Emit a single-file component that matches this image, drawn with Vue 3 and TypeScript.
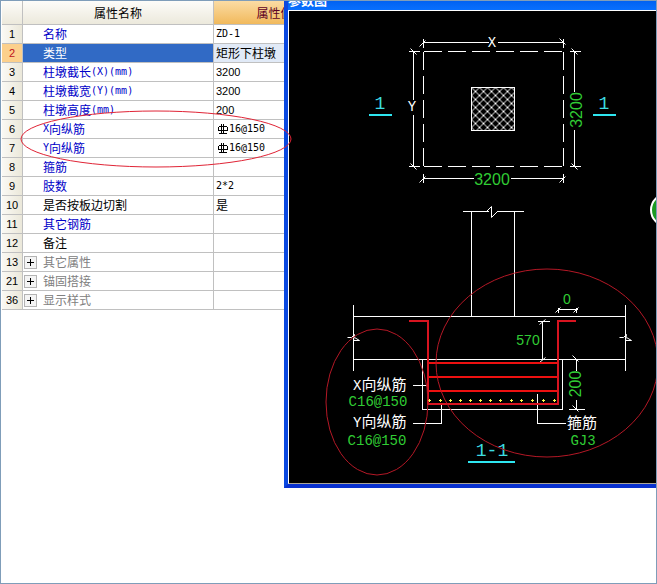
<script setup lang="ts">
import { h, ref, type FunctionalComponent } from 'vue'

type Tone = 'blue' | 'black' | 'gray'
interface Row {
  no: number
  name: string
  value?: string
  tone: Tone
  rebar?: boolean
  group?: boolean
}

const rows: Row[] = [
  { no: 1, name: '名称', value: 'ZD-1', tone: 'blue' },
  { no: 2, name: '类型', value: '矩形下柱墩', tone: 'blue' },
  { no: 3, name: '柱墩截长(X)(mm)', value: '3200', tone: 'blue' },
  { no: 4, name: '柱墩截宽(Y)(mm)', value: '3200', tone: 'blue' },
  { no: 5, name: '柱墩高度(mm)', value: '200', tone: 'blue' },
  { no: 6, name: 'X向纵筋', value: '16@150', tone: 'blue', rebar: true },
  { no: 7, name: 'Y向纵筋', value: '16@150', tone: 'blue', rebar: true },
  { no: 8, name: '箍筋', tone: 'blue' },
  { no: 9, name: '肢数', value: '2*2', tone: 'blue' },
  { no: 10, name: '是否按板边切割', value: '是', tone: 'black' },
  { no: 11, name: '其它钢筋', tone: 'blue' },
  { no: 12, name: '备注', tone: 'black' },
  { no: 13, name: '其它属性', tone: 'gray', group: true },
  { no: 21, name: '锚固搭接', tone: 'gray', group: true },
  { no: 36, name: '显示样式', tone: 'gray', group: true },
]

const selected = ref(2)
const dots: number[] = [429, 440, 450, 460, 470, 480, 490, 500, 511, 521, 532, 543, 554]

function runClass(run: string): string {
  if (/^\d+$/.test(run)) return 'digits'
  return /^[\x20-\x7e]/.test(run) ? 'latin' : 'han'
}

// Latin runs use narrow faces, Chinese runs keep the row's font.
const MixedText: FunctionalComponent<{ text: string }> = (props) =>
  (props.text.match(/[\x20-\x7e]+|[^\x20-\x7e]+/g) ?? []).map((run) =>
    h('span', { class: runClass(run) }, run),
  )
MixedText.props = ['text']
</script>

<template>
  <main class="panel">
    <table class="props">
      <colgroup>
        <col class="col-no" />
        <col class="col-name" />
        <col class="col-value" />
        <col />
      </colgroup>
      <thead>
        <tr>
          <th></th>
          <th>属性名称</th>
          <th class="active">属性值</th>
          <th></th>
        </tr>
      </thead>
      <tbody>
        <tr
          v-for="row in rows"
          :key="row.no"
          :class="{ selected: row.no === selected }"
          @click="selected = row.no"
        >
          <th scope="row">
            <div class="line number-line"><MixedText :text="String(row.no)" /></div>
          </th>
          <td class="name" :class="row.tone">
            <div class="line">
              <span class="toggle-slot">
                <button v-if="row.group" type="button" class="toggle" :aria-label="row.name">
                  <svg width="11" height="11" viewBox="0 0 11 11" aria-hidden="true">
                    <path d="M2 5h7v1h-7zM5 2h1v7h-1z" fill="#000" />
                  </svg>
                </button>
              </span>
              <MixedText :text="row.name" />
            </div>
          </td>
          <td class="value">
            <div class="line value-line">
              <svg v-if="row.rebar" width="13" height="11" viewBox="0 0 13 11" aria-hidden="true">
                <path
                  d="M3 2.500h8M2.500 3v4M3 6.500h8M11.500 3v4M5.500 0v9M7.500 0v9M3 9.500h8"
                  fill="none"
                  stroke="#000"
                />
              </svg>
              <MixedText v-if="row.value" :text="row.value" />
            </div>
          </td>
          <td></td>
        </tr>
      </tbody>
    </table>

    <section class="window">
      <header class="titlebar">参数图</header>
      <div class="canvas">
        <svg width="368" height="472" viewBox="289 11 368 472" role="img" aria-label="参数图">
          <defs>
            <pattern id="hatch" x="471" y="87" width="8" height="8" patternUnits="userSpaceOnUse">
              <path
                d="M-1-1l10 10M-1 9l10-10"
                stroke="#fff"
                stroke-width="1"
                fill="none"
                shape-rendering="crispEdges"
              />
            </pattern>
          </defs>

          <g transform="translate(.5 .5)" fill="none" stroke="#fff" stroke-width="1">
            <g shape-rendering="crispEdges">
              <path d="M423 51H563M423 166H563M423 51V166M563 51V166" stroke-dasharray="18 6" />
              <path d="M423 42H488M497 42H563M423 38v9M563 38v9" />
              <path d="M423 178H473M510 178H563M423 173v9M563 173v9" />
              <path d="M413 51V99M413 114V166M408 51h11M408 166h11" />
              <path d="M574 51V91M574 129V166M569 51h11M569 166h11" />
              <path d="M462 211H488M496 211H523M471 211V316M514 211V316" />
              <path d="M353 316H625M353 359H625M353 304V370M625 304V370" />
              <path d="M422 359V409H562V359" />
              <path d="M412 385H428M412 423H441V402M537 393V423H565" />
              <path d="M558 309H577M558 307v5M576 307v5" />
              <path d="M542 321V359M537 321h12" />
              <path d="M576 359V370M576 399V409M568 409h16" />
            </g>
            <path d="M419 46l6-6M559 38l6 6M419 182l6-6M559 182l6-6" />
            <path d="M410 48l6 6M410 163l6 6M571 48l6 6M571 163l6 6" />
            <path d="M486 211l5-5v11l6-6" />
            <path d="M347 337h4l3-3l-1 6h6l-5-3M619 337h4l3-3l-1 6h6l-5-3" />
            <path d="M555 312l5-5M573 312l5-5M539 324l6-5M539 362l6-5M572 355l6 6M572 405l6 6" />
            <rect x="471" y="87" width="43" height="43" fill="url(#hatch)" />
          </g>

          <g fill="none" stroke-width="2" shape-rendering="crispEdges">
            <path d="M409 321H428V404H558V321H576" stroke="#d81420" />
            <path d="M429 363H557M429 377H557M429 391H557" stroke="#ee1010" />
            <path d="M369 115H392M593 115H616M468 462H515" stroke="#2ee6f0" />
          </g>

          <g fill="#ffff50">
            <path v-for="x in dots" :key="x" :d="`M${x - 1} 400h3v1h-3zM${x} 399h1v3h-1z`" />
          </g>

          <g class="axis">
            <text x="492" y="47">X</text>
            <text x="412" y="111">Y</text>
          </g>

          <g class="dim">
            <text x="492" y="185">3200</text>
            <text transform="translate(582 110) rotate(-90)">3200</text>
            <text transform="translate(581 384) rotate(-90)">200</text>
            <text class="small" x="567" y="304">0</text>
            <text class="small" x="528" y="345">570</text>
          </g>

          <g class="spec">
            <text x="378" y="406">C16@150</text>
            <text x="377" y="445">C16@150</text>
            <text x="583" y="445">GJ3</text>
          </g>

          <g class="mark">
            <text x="380" y="109">1</text>
            <text x="604" y="109">1</text>
            <text x="492" y="456">1-1</text>
          </g>

          <g class="label">
            <text x="353" y="390"><tspan class="letter">X</tspan>向纵筋</text>
            <text x="353" y="427"><tspan class="letter">Y</tspan>向纵筋</text>
            <text x="567" y="428">箍筋</text>
          </g>

          <circle cx="667" cy="210" r="16" fill="#1c9a22" stroke="#fff" stroke-width="2" />
        </svg>
      </div>
    </section>

    <svg class="notes" width="657" height="584" viewBox="0 0 657 584" aria-hidden="true">
      <g fill="none" stroke-width="1">
        <ellipse cx="156" cy="139" rx="135" ry="28" stroke="#e02436" />
        <ellipse cx="377" cy="402" rx="51" ry="73" stroke="#b41826" />
        <ellipse cx="547" cy="363" rx="111" ry="94" stroke="#b41826" />
      </g>
    </svg>
  </main>
</template>

<style>
html,
body {
  margin: 0;
  background: #fff;
}
</style>

<style scoped>
.panel {
  position: relative;
  box-sizing: border-box;
  min-height: 100vh;
  overflow: hidden;
  border: 1px solid #7f9db9;
  padding-left: 1px;
  background: #fff;
  color: #000;
  font-family: "Noto Sans CJK SC", sans-serif;
  font-size: 12px;
}

.props {
  width: 100%;
  table-layout: fixed;
  border-collapse: separate;
  border-spacing: 0;
}

.col-no {
  width: 21px;
}

.col-name {
  width: 191px;
}

.col-value {
  width: 122px;
}

th,
td {
  box-sizing: border-box;
  height: 19px;
  padding: 0;
  border-right: 1px solid #c0c0c0;
  border-bottom: 1px solid #c0c0c0;
  font-weight: 400;
  line-height: 18px;
  white-space: nowrap;
}

thead th {
  height: 24px;
  line-height: 23px;
  background: linear-gradient(#fdfcf9, #ece9dc);
}

thead .active {
  background: linear-gradient(#fbdca4, #f1b95c);
  color: #5c0024;
}

tbody th {
  background: linear-gradient(90deg, #faf9f4, #ebe8da);
}

.line {
  display: flex;
  align-items: center;
  height: 18px;
}

.number-line {
  justify-content: center;
}

.value-line {
  padding-left: 2px;
}

.toggle-slot {
  display: flex;
  width: 19px;
  padding-left: 1px;
}

.toggle {
  display: flex;
  width: 13px;
  height: 13px;
  padding: 0;
  border: 1px solid #b4b4b4;
  border-radius: 0;
  background: #f4f4f4;
}

.line :deep(.latin) {
  font-family: "DejaVu Sans Mono", monospace;
  font-size: 10px;
}

.line :deep(.digits) {
  font-family: "Liberation Sans", sans-serif;
  font-size: 11px;
}

.blue {
  color: #0000c8;
}

.gray {
  color: #808080;
}

.selected th {
  background: #fcd08c;
  color: #c01020;
}

.selected .name {
  background: #316ac5;
  color: #fff;
}

.selected .value {
  background: #e1eaf7;
}

.window {
  position: absolute;
  top: -1px;
  right: -1px;
  left: 283px;
  border-bottom: 4px solid #0831d0;
  border-left: 4px solid #0a48e0;
  background: #000;
}

.titlebar {
  display: flex;
  align-items: flex-end;
  height: 10px;
  overflow: hidden;
  background: linear-gradient(#0060f0, #0870ff);
  color: #fff;
  font-size: 13px;
  font-weight: 700;
  line-height: 20px;
}

.canvas {
  overflow: hidden;
  border-top: 1px solid #fff;
  border-bottom: 1px solid #aca899;
  border-left: 1px solid #fff;
}

.canvas svg {
  display: block;
}

.axis,
.dim,
.spec,
.mark {
  font-family: "Liberation Mono", monospace;
  text-anchor: middle;
}

.axis {
  fill: #fff;
  font-size: 14px;
}

.dim,
.spec {
  fill: #30cc34;
}

.dim {
  font-family: "Liberation Sans", sans-serif;
  font-size: 16px;
}

.spec,
.dim .small {
  font-size: 14px;
}

.mark {
  fill: #3cdce0;
  font-size: 18px;
}

.label {
  fill: #fff;
  font-size: 15px;
}

.letter {
  font-family: "Liberation Mono", monospace;
  font-size: 14px;
}

.notes {
  position: absolute;
  top: -1px;
  left: -1px;
  pointer-events: none;
}
</style>
